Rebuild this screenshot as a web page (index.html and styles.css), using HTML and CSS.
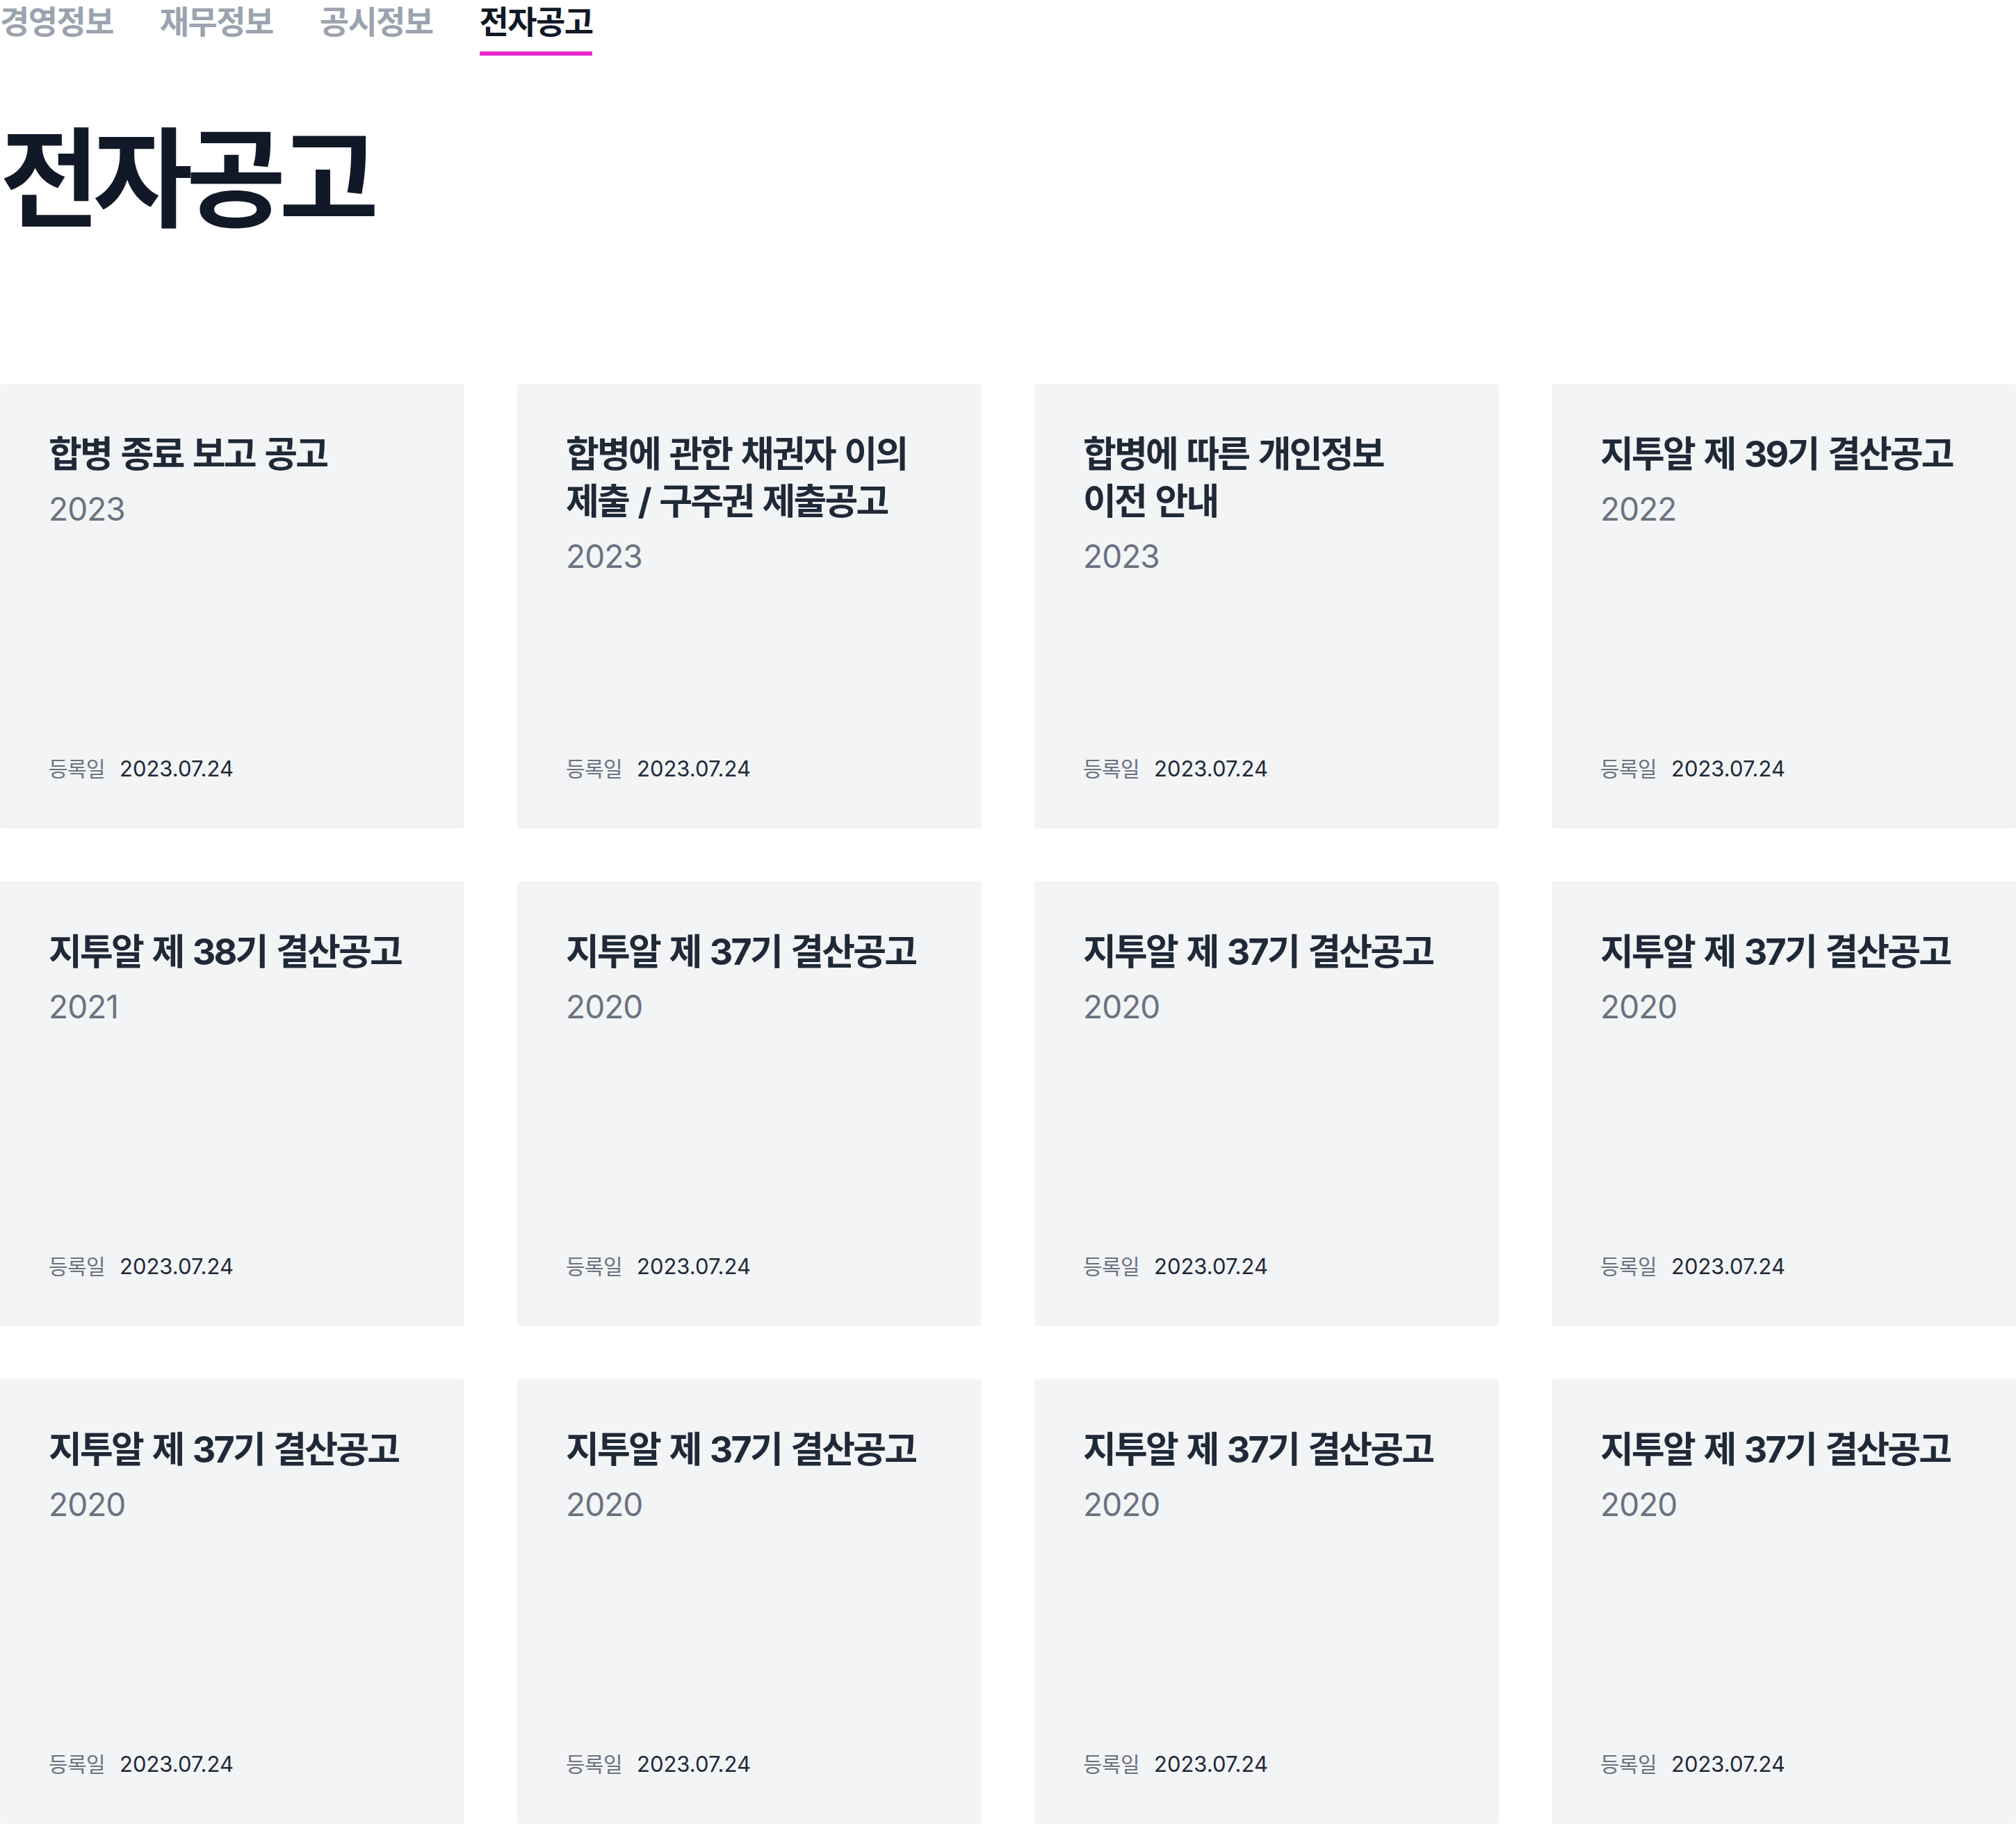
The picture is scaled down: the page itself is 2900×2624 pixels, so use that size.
FILE: index.html
```html
<!DOCTYPE html>
<html lang="ko">
<head>
<meta charset="utf-8">
<title>전자공고</title>
<link rel="stylesheet" href="styles.css">
</head>
<body>
<div class="page">
  <nav class="tabs">
    <a class="tab">경영정보</a>
    <a class="tab">재무정보</a>
    <a class="tab">공시정보</a>
    <a class="tab tab-active">전자공고</a>
  </nav>
  <h1 class="heading">전자공고</h1>
  <section class="grid">
    <article class="card"><div class="card-top"><h2 class="card-title">합병 종료 보고 공고</h2><p class="card-year">2023</p></div><p class="card-date"><span class="date-label">등록일</span><span class="date-value">2023.07.24</span></p></article>
    <article class="card"><div class="card-top"><h2 class="card-title">합병에 관한 채권자 이의 제출 / 구주권 제출공고</h2><p class="card-year">2023</p></div><p class="card-date"><span class="date-label">등록일</span><span class="date-value">2023.07.24</span></p></article>
    <article class="card"><div class="card-top"><h2 class="card-title">합병에 따른 개인정보 이전 안내</h2><p class="card-year">2023</p></div><p class="card-date"><span class="date-label">등록일</span><span class="date-value">2023.07.24</span></p></article>
    <article class="card"><div class="card-top"><h2 class="card-title">지투알 제 39기 결산공고</h2><p class="card-year">2022</p></div><p class="card-date"><span class="date-label">등록일</span><span class="date-value">2023.07.24</span></p></article>
    <article class="card"><div class="card-top"><h2 class="card-title">지투알 제 38기 결산공고</h2><p class="card-year">2021</p></div><p class="card-date"><span class="date-label">등록일</span><span class="date-value">2023.07.24</span></p></article>
    <article class="card"><div class="card-top"><h2 class="card-title">지투알 제 37기 결산공고</h2><p class="card-year">2020</p></div><p class="card-date"><span class="date-label">등록일</span><span class="date-value">2023.07.24</span></p></article>
    <article class="card"><div class="card-top"><h2 class="card-title">지투알 제 37기 결산공고</h2><p class="card-year">2020</p></div><p class="card-date"><span class="date-label">등록일</span><span class="date-value">2023.07.24</span></p></article>
    <article class="card"><div class="card-top"><h2 class="card-title">지투알 제 37기 결산공고</h2><p class="card-year">2020</p></div><p class="card-date"><span class="date-label">등록일</span><span class="date-value">2023.07.24</span></p></article>
    <article class="card"><div class="card-top"><h2 class="card-title">지투알 제 37기 결산공고</h2><p class="card-year">2020</p></div><p class="card-date"><span class="date-label">등록일</span><span class="date-value">2023.07.24</span></p></article>
    <article class="card"><div class="card-top"><h2 class="card-title">지투알 제 37기 결산공고</h2><p class="card-year">2020</p></div><p class="card-date"><span class="date-label">등록일</span><span class="date-value">2023.07.24</span></p></article>
    <article class="card"><div class="card-top"><h2 class="card-title">지투알 제 37기 결산공고</h2><p class="card-year">2020</p></div><p class="card-date"><span class="date-label">등록일</span><span class="date-value">2023.07.24</span></p></article>
    <article class="card"><div class="card-top"><h2 class="card-title">지투알 제 37기 결산공고</h2><p class="card-year">2020</p></div><p class="card-date"><span class="date-label">등록일</span><span class="date-value">2023.07.24</span></p></article>
  </section>
</div>
</body>
</html>
```

FILE: styles.css
```css
* {
  box-sizing: border-box;
}

html, body {
  margin: 0;
  padding: 0;
  background: #ffffff;
}

body {
  font-family: Inter, "Noto Sans CJK KR", sans-serif;
  color: #1f2937;
}

.page {
  width: 2900px;
}

.tabs {
  display: flex;
  gap: 67px;
  height: 80px;
}

.tab {
  display: block;
  font-family: "Noto Sans CJK KR", sans-serif;
  font-size: 46px;
  font-weight: 700;
  line-height: 56px;
  letter-spacing: -0.035em;
  color: #9ca3af;
  padding-bottom: 18px;
  border-bottom: 6px solid transparent;
}

.tab-active {
  color: #111827;
  border-bottom-color: #e62ace;
}

.heading {
  margin: 88px 0 228px 0;
  font-family: "Noto Sans CJK KR", sans-serif;
  font-size: 156px;
  font-weight: 700;
  line-height: 156px;
  letter-spacing: -0.062em;
  color: #111827;
}

.grid {
  display: grid;
  grid-template-columns: repeat(4, 1fr);
  gap: 76px;
}

.card {
  height: 640px;
  background: #f3f4f6;
  border-radius: 4px;
  padding: 68px 40px 64px 70px;
  display: flex;
  flex-direction: column;
  justify-content: space-between;
}

.card-title {
  margin: 0;
  max-width: 520px;
  font-family: Inter, "Noto Sans CJK KR", sans-serif;
  font-size: 52px;
  font-weight: 700;
  line-height: 68px;
  letter-spacing: -0.055em;
  word-spacing: 4px;
  word-break: keep-all;
  color: #1f2937;
}

.card-year {
  margin: 12px 0 0 0;
  font-family: Inter, sans-serif;
  font-size: 46px;
  font-weight: 400;
  line-height: 64px;
  letter-spacing: -0.02em;
  color: #6b7280;
}

.card-date {
  margin: 0;
  display: flex;
  align-items: baseline;
  gap: 21px;
  line-height: 44px;
}

.date-label {
  font-family: "Noto Sans CJK KR", sans-serif;
  font-size: 30px;
  letter-spacing: -0.02em;
  color: #6b7280;
}

.date-value {
  font-family: Inter, sans-serif;
  font-size: 31px;
  letter-spacing: 0;
  color: #1f2937;
}
```
